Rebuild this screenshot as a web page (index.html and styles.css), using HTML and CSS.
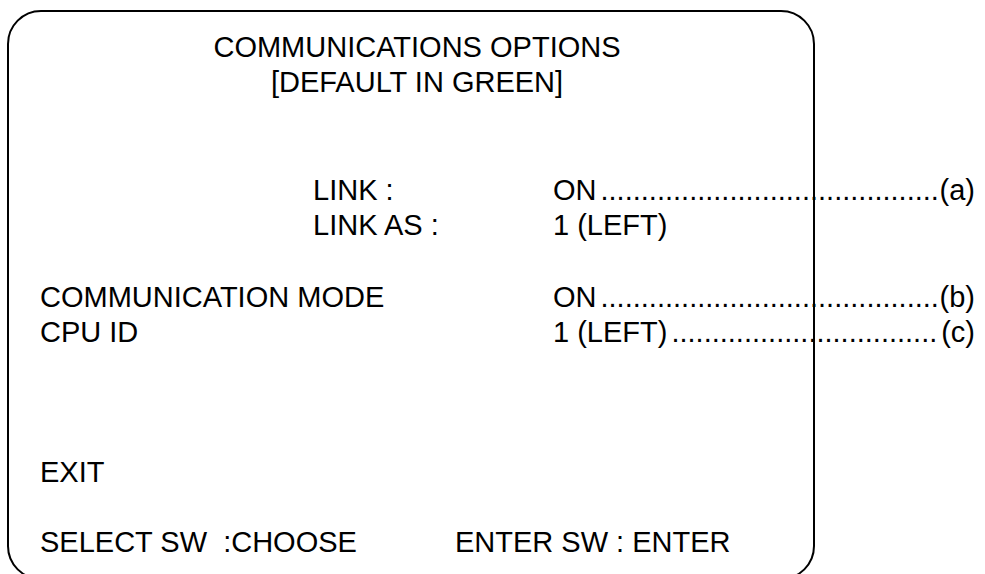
FILE: index.html
```html
<!DOCTYPE html>
<html lang="en">
<head>
  <meta charset="UTF-8">
  <title>Communications Options</title>
  <link rel="stylesheet" href="styles.css">
</head>
<body>

  <div class="screen">
    <div class="title">
      COMMUNICATIONS OPTIONS<br>
      [DEFAULT IN GREEN]
    </div>

    <div class="options link-group">
      <div class="label sub">LINK :</div>
      <div class="value">ON<span class="leader">..........................................</span>(a)</div>
      <div class="label sub">LINK AS :</div>
      <div class="value">1 (LEFT)</div>
    </div>

    <div class="options comm-group">
      <div class="label">COMMUNICATION MODE</div>
      <div class="value">ON<span class="leader">..........................................</span>(b)</div>
      <div class="label">CPU ID</div>
      <div class="value">1 (LEFT)<span class="leader">.................................</span>(c)</div>
    </div>

    <div class="exit">EXIT</div>

    <div class="footer">
      <span class="footer-select">SELECT SW&nbsp;&nbsp;:CHOOSE</span>
      <span>ENTER SW : ENTER</span>
    </div>
  </div>

</body>
</html>
```

FILE: styles.css
```css
body {
  margin: 0;
  font-family: "Liberation Sans", Arial, sans-serif;
  font-size: 29px;
  line-height: 34.5px;
  color: #000;
  background-color: #fff;
  overflow: hidden;
}

.screen {
  box-sizing: border-box;
  width: 808px;
  margin: 10px 0 0 7px;
  padding: 18px 0 18px 31px;
  border: 2px solid #000;
  border-radius: 34px;
}

.title {
  margin-left: -31px;
  padding-left: 12px;
  text-align: center;
}

.options {
  display: grid;
  grid-template-columns: 513px 422px;
}

.link-group {
  margin-top: 74px;
}

.comm-group {
  margin-top: 38px;
}

.label.sub {
  padding-left: 273px;
}

.value {
  display: flex;
  white-space: nowrap;
}

.leader {
  flex: 1;
  padding-left: 4px;
  white-space: nowrap;
}

.exit {
  margin-top: 106px;
}

.footer {
  display: flex;
  margin-top: 35.5px;
  white-space: nowrap;
}

.footer-select {
  width: 415px;
}
```
